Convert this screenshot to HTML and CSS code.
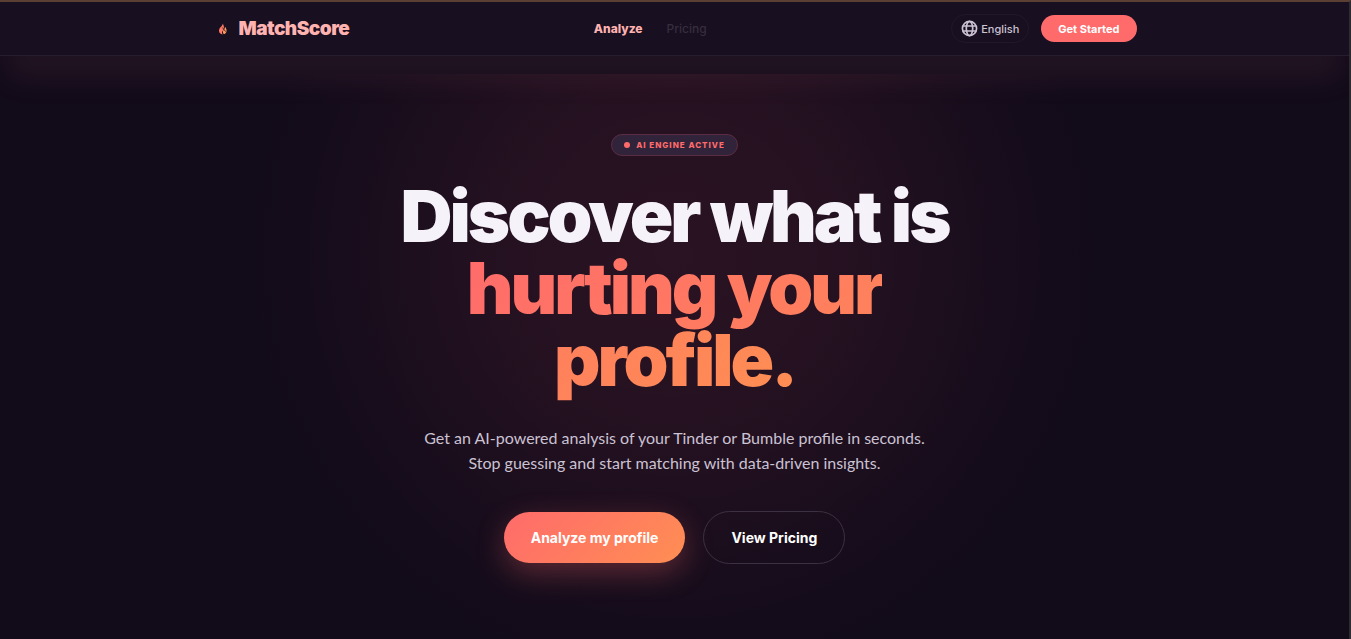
FILE: index.html
```html
<!DOCTYPE html>
<html lang="en">
<head>
    <meta charset="UTF-8">
    <meta name="viewport" content="width=device-width, initial-scale=1.0">
    <title>MatchScore</title>
    <link rel="stylesheet" href="styles.css">
</head>
<body>

<header class="navbar">
    <div class="nav-inner">
        <a href="#" class="logo">
            <svg class="logo-icon" viewBox="0 0 20 20" aria-hidden="true">
                <path d="M9.800 4.500C10 6.700 6 8.500 6 11.800c0 2 1.500 3.500 3.700 3.600-1.400-1.600-.6-3 .5-4.200C11.400 9.800 11 6.500 9.800 4.500z" fill="#ff7a66"/>
                <path d="M12 7.800c.1 2.500-2 3.200-2.100 4.900 0 1 .5 1.900 1 2.500 1.700-.4 2.800-1.700 2.700-3.600 0-1.400-.8-2.800-1.600-3.800z" fill="#ff9a5c"/>
                <path d="M9.300 8.500l3.500 4.200" stroke="#180f20" stroke-width=".8"/>
            </svg>
            <span>MatchScore</span>
        </a>
        <nav class="nav-links">
            <a href="#" class="active">Analyze</a>
            <a href="#">Pricing</a>
        </nav>
        <div class="nav-actions">
            <button type="button" class="lang">
                <svg viewBox="0 0 24 24" aria-hidden="true">
                    <g fill="none" stroke="currentColor" stroke-width="2.400">
                        <circle cx="12" cy="12" r="10"/>
                        <ellipse cx="12" cy="12" rx="4.500" ry="10"/>
                        <path d="M3 8.500h18M3 15.500h18"/>
                    </g>
                </svg>
                English
            </button>
            <button type="button" class="get-started">Get Started</button>
        </div>
    </div>
</header>

<main class="hero">
    <div class="badge"><span class="dot"></span>AI ENGINE ACTIVE</div>
    <h1>Discover what is<br><span class="gradient">hurting your<br>profile.</span></h1>
    <p>Get an AI-powered analysis of your Tinder or Bumble profile in seconds.<br>Stop guessing and start matching with data-driven insights.</p>
    <div class="buttons">
        <button type="button" class="btn primary">Analyze my profile</button>
        <button type="button" class="btn secondary">View Pricing</button>
    </div>
</main>

</body>
</html>
```
FILE: styles.css
```css
* {
    box-sizing: border-box;
}

body {
    margin: 0;
    min-height: 100vh;
    background: #120b1a;
    border-top: 2px solid #5c3f33;
    border-right: 2px solid #2e2b30;
    color: #f5f2f9;
    font-family: Inter, "Liberation Sans", sans-serif;
    display: flex;
    flex-direction: column;
    overflow-x: hidden;
}

a {
    color: inherit;
    text-decoration: none;
}

button {
    font-family: inherit;
    cursor: pointer;
}

/* top bar */
.navbar {
    position: relative;
    background: #180f20;
    border-bottom: 1px solid #261d2d;
    box-shadow: 0 28px 32px -6px rgba(255, 140, 150, 0.08);
}

.nav-inner {
    max-width: 924px;
    height: 53px;
    margin: 0 auto;
    display: flex;
    justify-content: space-between;
    align-items: center;
}

.logo {
    display: flex;
    align-items: center;
    gap: 6px;
    color: #ffb3b0;
    font-size: 19px;
    font-weight: 900;
    letter-spacing: -0.5px;
}

.logo-icon {
    width: 20px;
    height: 20px;
}

.nav-links {
    display: flex;
    gap: 24px;
    color: #362d3e;
    font-size: 12px;
    font-weight: 500;
}

.nav-links .active {
    color: #ffb3b0;
    font-weight: 800;
}

.nav-actions {
    display: flex;
    align-items: center;
    gap: 12px;
}

.lang {
    display: flex;
    align-items: center;
    gap: 3px;
    height: 29px;
    padding: 0 9px;
    background: none;
    border: 1px solid #21182a;
    border-radius: 15px;
    color: #cbc2d3;
    font-size: 11px;
    font-weight: 500;
}

.lang svg {
    width: 17px;
    height: 17px;
}

.get-started {
    height: 27px;
    padding: 0 17px;
    background: #ff6b6b;
    border: 0;
    border-radius: 14px;
    color: #fff;
    font-size: 11px;
    font-weight: 700;
}

/* hero */
.hero {
    flex: 1;
    margin-top: 18px;
    padding: 60px 20px;
    display: flex;
    flex-direction: column;
    align-items: center;
    text-align: center;
    background: radial-gradient(circle 430px at 50% 180px, rgba(255, 90, 110, 0.1), rgba(255, 90, 110, 0.08) 40%, rgba(255, 90, 110, 0.02) 80%, transparent);
}

.badge {
    display: flex;
    align-items: center;
    gap: 6px;
    height: 22px;
    padding: 0 12px;
    background: #30233a;
    border: 1px solid #5c2d42;
    border-radius: 11px;
    color: #ff6b6b;
    font-size: 8px;
    font-weight: 800;
    letter-spacing: 1px;
}

.dot {
    width: 6px;
    height: 6px;
    border-radius: 50%;
    background: #ff6b6b;
}

h1 {
    margin: 24px 0 29px;
    font-size: 72px;
    line-height: 72px;
    font-weight: 900;
    letter-spacing: -3px;
}

.gradient {
    background: linear-gradient(135deg, #ff6b6b, #ff8e53);
    -webkit-background-clip: text;
    background-clip: text;
    color: transparent;
}

.hero p {
    margin: 0 0 36px;
    color: #cbc2d3;
    font-family: Lato, "Liberation Sans", sans-serif;
    font-size: 16px;
    line-height: 25px;
}

.buttons {
    display: flex;
    align-items: center;
    gap: 18px;
}

.btn {
    border: 0;
    border-radius: 27px;
    padding: 0 27px;
    height: 51px;
    color: #fff;
    font-size: 14px;
    font-weight: 700;
}

.primary {
    background: linear-gradient(135deg, #ff6b6b, #ff8e53);
    box-shadow: 0 10px 30px rgba(255, 107, 107, 0.3);
}

.secondary {
    height: 53px;
    background: transparent;
    border: 1px solid #3b3142;
}
```
